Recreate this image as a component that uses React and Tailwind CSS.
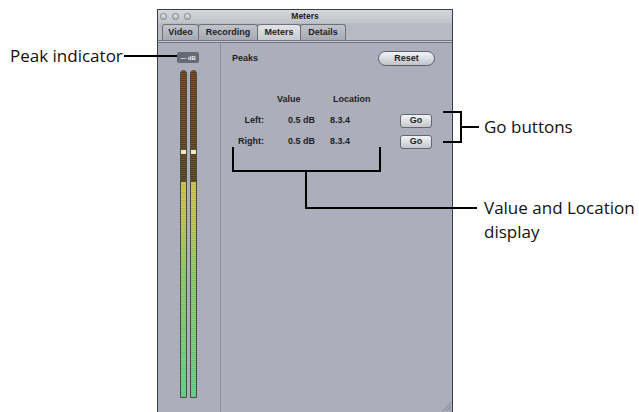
import React from 'react';

const tabs = [
  { name: 'Video', w: 'w-[37px]' },
  { name: 'Recording', w: 'w-[60px]' },
  { name: 'Meters', w: 'w-[44px]', active: true },
  { name: 'Details', w: 'w-[46px]' },
];

const peaks = [
  { label: 'Left:', value: '0.5 dB', location: '8.3.4' },
  { label: 'Right:', value: '0.5 dB', location: '8.3.4' },
];

// two-channel level meter, drawn
function Meter() {
  return (
    <svg width="18" height="328" viewBox="0 0 18 328">
      <defs>
        <linearGradient id="hot" x1="0" y1="0" x2="0" y2="1">
          <stop offset="0" stopColor="#94542a" />
          <stop offset="0.6" stopColor="#7e5a2c" />
          <stop offset="1" stopColor="#6b5c2e" />
        </linearGradient>
        <linearGradient id="lit" x1="0" y1="0" x2="0" y2="1">
          <stop offset="0" stopColor="#d3c85a" />
          <stop offset="0.18" stopColor="#c6ca5c" />
          <stop offset="0.42" stopColor="#93d26c" />
          <stop offset="1" stopColor="#6bd690" />
        </linearGradient>
        <pattern id="seg" width="8" height="2" patternUnits="userSpaceOnUse">
          <rect width="8" height="1" fill="#2a2216" fillOpacity="0.6" />
        </pattern>
        <pattern id="seg2" width="8" height="2" patternUnits="userSpaceOnUse">
          <rect width="8" height="1" fill="#1e2a18" fillOpacity="0.12" />
        </pattern>
        {[0, 10].map((x) => (
          <clipPath key={x} id={`bar${x}`}>
            <path d={`M${x + 0.5} 327.5 V3.5 A3 3 0 0 1 ${x + 6.5} 3.5 V327.5 Z`} />
          </clipPath>
        ))}
      </defs>
      {[0, 10].map((x) => (
        <g key={x}>
          <g clipPath={`url(#bar${x})`}>
            <rect x={x} y="0" width="7" height="112" fill="url(#hot)" />
            <rect x={x} y="0" width="7" height="112" fill="url(#seg)" />
            <rect x={x} y="112" width="7" height="216" fill="url(#lit)" />
            <rect x={x} y="112" width="7" height="216" fill="url(#seg2)" />
            <rect x={x} y="80" width="7" height="4" fill="#f1e9c6" />
          </g>
          <path
            d={`M${x + 0.5} 327.5 V3.5 A3 3 0 0 1 ${x + 6.5} 3.5 V327.5 Z`}
            fill="none"
            stroke="#4a4c44"
            strokeWidth="1"
          />
        </g>
      ))}
    </svg>
  );
}

export default function App() {
  return (
    <div className="relative h-[412px] w-[639px] overflow-hidden bg-white pl-[157px] pt-[9px]">
      {/* Meters window */}
      <div className="flex h-[403px] w-[296px] flex-col border-x border-t border-[#3a3e49] bg-[#acafbb] font-['Liberation_Sans',sans-serif] text-[#1d1e23]">
        {/* Title bar */}
        <div className="grid h-[13px] grid-cols-[1fr_auto_1fr] items-center bg-linear-to-b from-[#d6d7dc] to-[#c0c2c9]">
          <div className="flex gap-[5px] pl-[2px]">
            {[0, 1, 2].map((i) => (
              <span
                key={i}
                className="h-[7px] w-[7px] rounded-full border border-[#7f828c] bg-linear-to-b from-[#e4e5e9] to-[#b8bac2]"
              />
            ))}
          </div>
          <span className="text-[8.5px] font-bold leading-none">Meters</span>
          <span />
        </div>

        {/* Tabs */}
        <div className="flex h-[17px] items-end bg-[#b8bac3] pl-[4px]">
          {tabs.map((t, i) => (
            <div
              key={t.name}
              className={`flex h-[16px] items-center justify-center rounded-t-[3px] border border-b-0 border-[#6e717b] text-[9px] font-bold ${t.w} ${i > 0 ? '-ml-px' : ''} ${
                t.active
                  ? 'bg-linear-to-b from-[#e2e3e7] to-[#c9cbd1]'
                  : 'bg-linear-to-b from-[#c2c4cb] to-[#a7aab3]'
              }`}
            >
              {t.name}
            </div>
          ))}
        </div>
        <div className="h-[3px] border-y border-[#737681] bg-[#c3c5cc]" />

        {/* Body */}
        <div className="flex flex-1">
          {/* Meter column */}
          <div className="flex w-[63px] flex-col items-start border-r border-[#8b8e99]">
            <div className="ml-[19px] mt-[9px] flex h-[11px] w-[22px] items-center justify-center rounded-[2px] bg-[#666974] text-[6px] font-bold leading-none text-[#eef0f4]">
              — dB
            </div>
            <div className="ml-[22px] mt-[7px]">
              <Meter />
            </div>
          </div>

          {/* Peaks pane */}
          <div className="flex flex-1 flex-col">
            <div className="flex items-center justify-between pl-[11px] pr-[17px] pt-[8px]">
              <span className="text-[9px] font-bold">Peaks</span>
              <button className="flex h-[15px] w-[57px] items-center justify-center rounded-full border border-[#5b5e67] bg-linear-to-b from-[#f3f4f6] to-[#c1c3c9] text-[9px] font-bold">
                Reset
              </button>
            </div>

            <div className="mt-[28px] flex h-[12px] items-center text-[9px] font-bold">
              <span className="w-[56px]" />
              <span className="w-[56px]">Value</span>
              <span>Location</span>
            </div>

            {peaks.map((p, i) => (
              <div
                key={p.label}
                className={`flex h-[21px] items-center text-[9px] font-bold ${i === 0 ? 'mt-[4px]' : ''}`}
              >
                <span className="w-[43px] text-right">{p.label}</span>
                <span className="ml-[24px] w-[42px]">{p.value}</span>
                <span className="w-[70px]">{p.location}</span>
                <button className="flex h-[14px] w-[32px] items-center justify-center rounded-[3px] border border-[#646771] bg-linear-to-b from-[#f4f5f7] to-[#c4c6cc] text-[9px] font-bold">
                  Go
                </button>
              </div>
            ))}

            <div className="mt-auto flex justify-end pb-[1px] pr-[1px]">
              <svg width="9" height="9" viewBox="0 0 9 9">
                <path d="M1 9 L9 1 M4 9 L9 4 M7 9 L9 7" stroke="#7d808b" strokeWidth="1" />
              </svg>
            </div>
          </div>
        </div>
      </div>

      {/* Callouts */}
      <div className="font-['Open_Sans',sans-serif] text-[17px] leading-[24px] text-[#111]">
        <span className="absolute left-[10px] top-[44px]">Peak indicator</span>
        <div className="absolute left-[124px] top-[55px] h-[2px] w-[53px] bg-black" />

        <div className="absolute left-[443px] top-[111px] h-[32px] w-[19px] border-y-2 border-r-2 border-black" />
        <div className="absolute left-[462px] top-[126px] h-[2px] w-[17px] bg-black" />
        <span className="absolute left-[484px] top-[115px]">Go buttons</span>

        <div className="absolute left-[232px] top-[147px] h-[25px] w-[149px] border-x-2 border-b-2 border-black" />
        <div className="absolute left-[305px] top-[172px] h-[37px] w-[2px] bg-black" />
        <div className="absolute left-[305px] top-[207px] h-[2px] w-[172px] bg-black" />
        <span className="absolute left-[484px] top-[196px]">
          Value and Location
          <br />
          display
        </span>
      </div>
    </div>
  );
}
